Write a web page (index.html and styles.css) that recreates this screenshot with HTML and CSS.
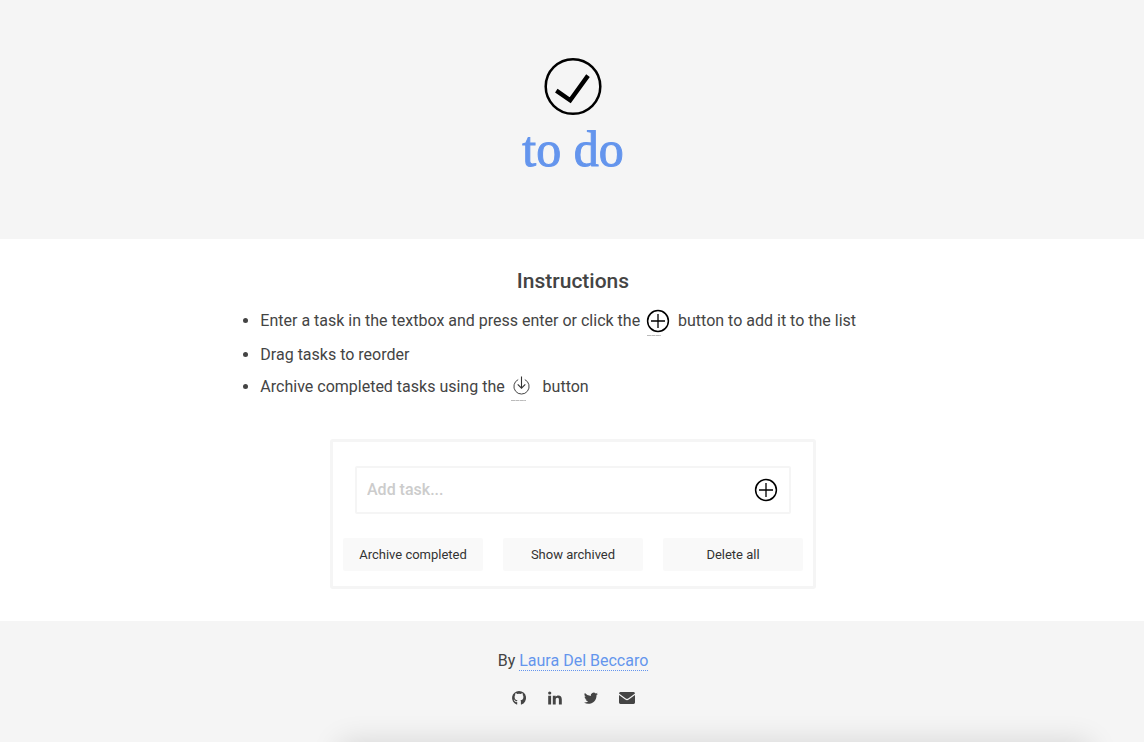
FILE: index.html
```html
<!DOCTYPE html>
<html lang="en">
<head>
<meta charset="utf-8">
<title>to do</title>
<meta name="viewport" content="width=device-width, initial-scale=1">
<link rel="stylesheet" href="styles.css">
</head>
<body>
<svg class="defs" aria-hidden="true">
  <symbol id="plus" viewBox="0 0 24 24"><circle cx="12" cy="12" r="10.4" fill="none" stroke="#000" stroke-width="1.5"/><path d="M12 5v14M5 12h14" stroke="#000" stroke-width="1.3"/></symbol>
</svg>
<header class="banner">
  <svg class="logo" viewBox="0 0 60 60" aria-hidden="true"><circle cx="30" cy="30.500" r="27.300" fill="none" stroke="#000" stroke-width="2.500"/><path d="M13.300 34.600 27.200 44.200 45 19.600" fill="none" stroke="#000" stroke-width="4.400"/></svg>
  <h1 class="title">to do</h1>
</header>
<main class="main">
  <section class="instructions">
    <h2 class="heading">Instructions</h2>
    <ul class="list">
      <li>Enter a task in the textbox and press enter or click the <svg class="icon-add" viewBox="0 0 26 28" role="img" aria-label="add"><use href="#plus" x="1" y="0" width="24" height="24"/><path d="M2 26.500h14" stroke="#bbb" stroke-width="1" stroke-dasharray="4 .4"/></svg> button to add it to the list</li>
      <li>Drag tasks to reorder</li>
      <li>Archive completed tasks using the <svg class="icon-archive" viewBox="0 0 26 28" role="img" aria-label="archive"><path d="M9.200 4.600A7.600 7.600 0 1 0 15.800 4.600" fill="none" stroke="#444" stroke-width="1"/><path d="M12.500 1.500v11.500M8.700 9.400l3.800 3.800 3.800-3.800" fill="none" stroke="#333" stroke-width="1.100"/><path d="M2 25.500h15" stroke="#bbb" stroke-width="1" stroke-dasharray="4 .4"/></svg> button</li>
    </ul>
  </section>
  <section class="card">
    <form class="entry">
      <input class="entry-input" type="text" placeholder="Add task..." aria-label="Add task">
      <button class="entry-add" type="button" aria-label="Add"><svg class="icon-plus"><use href="#plus"/></svg></button>
    </form>
    <div class="actions">
      <button class="action" type="button">Archive completed</button>
      <button class="action" type="button">Show archived</button>
      <button class="action" type="button">Delete all</button>
    </div>
  </section>
</main>
<footer class="footer">
  <p class="credit">By <a class="author" href="#">Laura Del Beccaro</a></p>
  <nav class="social">
    <a href="#" aria-label="GitHub"><svg viewBox="0 0 16 16"><path fill="#444" d="M8 1a7 7 0 0 0-2.3 13.6c.4.1.5-.1.5-.4v-2.1c-2 .4-2.500-.9-2.500-.9-.3-.8-.8-1-.8-1-.6-.4.1-.4.1-.4.7 0 1.100.7 1.100.7.6 1.100 1.600.8 2 .6.1-.5.3-.8.5-.9-1.600-.2-3-.8-3-3.200 0-.9.2-1.400.7-1.900-.1-.2-.3-.9.1-1.900 0 0 .6-.2 1.900.7a6.500 6.500 0 0 1 3.400 0c1.300-.9 1.900-.7 1.900-.7.4 1 .2 1.700.1 1.900.5.5.7 1 .7 1.900 0 2.400-1.400 3-3 3.200.3.2.5.6.5 1.300v2.700c0 .3.1.5.5.4A7 7 0 0 0 8 1z"/><path d="M5.200 5.700Q8 4.300 10.800 5.700 12.800 10 8 10.200 3.200 10 5.200 5.700z" fill="#f5f5f5"/></svg></a>
    <a href="#" aria-label="LinkedIn"><svg viewBox="0 0 16 16"><path fill="#444" d="M1.200 5.700h2.900v8.700H1.200zM5.800 5.700h2.900v1.200c.5-.8 1.300-1.400 2.700-1.400 2.200 0 3.400 1.400 3.400 3.900v5h-2.900V9.700c0-1.200-.5-1.900-1.500-1.900-1.100 0-1.700.8-1.700 2v4.600H5.800z"/><circle cx="2.700" cy="3" r="1.600" fill="#444"/></svg></a>
    <a href="#" aria-label="Twitter"><svg viewBox="0 0 16 16"><path fill="#444" d="M15 3.700a6 6 0 0 1-1.500 1.500c.2 5-3.600 8.600-8.200 8.600A8 8 0 0 1 1 12.500a6 6 0 0 0 4.200-1.200 3 3 0 0 1-2.700-2h1.300A2.900 2.900 0 0 1 1.500 6.400c.4.2.8.3 1.300.4A2.900 2.900 0 0 1 1.900 3a8.200 8.200 0 0 0 5.900 3 2.900 2.900 0 0 1 4.900-2.600l1.900-.7-1.300 1.500z"/></svg></a>
    <a href="#" aria-label="Email"><svg viewBox="0 0 16 16"><path fill="#444" d="M1.400 2h13.200Q16 2 16 3.500L9.200 8.600Q8 9.400 6.800 8.600L0 3.600Q0 2 1.400 2zM0 5l6.200 4.600q1.800 1.200 3.600 0L16 5v7.600q0 1.400-1.400 1.400H1.400Q0 14 0 12.600z"/></svg></a>
  </nav>
</footer>
<div class="shade" aria-hidden="true"></div>
</body>
</html>
```
FILE: styles.css
```css
* { box-sizing: border-box; }

body {
  margin: 0;
  min-height: 100vh;
  display: flex;
  flex-direction: column;
  background: #fff;
  color: #444;
  font: 16px/24px Roboto, sans-serif;
  overflow-x: hidden;
}

.defs { position: absolute; width: 0; height: 0; }

.banner {
  display: flex;
  flex-direction: column;
  align-items: center;
  padding: 56px 20px 60px 22px;
  background: #f5f5f5;
}

.logo { width: 60px; height: 60px; }

.title {
  margin: 0;
  padding-top: 3px;
  color: #6495ed;
  font: 400 50px/60px "Liberation Serif", serif;
  -webkit-text-stroke: 1px #6495ed;
}

.main { padding: 28px 20px 32px 22px; }

.instructions { width: 64%; min-width: 300px; margin: 0 auto; }

.heading {
  margin: 0;
  text-align: center;
  font-size: 21px;
  font-weight: 500;
  line-height: 28px;
}

.list { margin: 10px 0 36px; padding-left: 40px; }
.list li { line-height: 32px; }
.list li:first-child { padding-bottom: 2px; }

.icon-add, .icon-archive { width: 26px; height: 28px; vertical-align: -11px; }
.icon-add { margin: 0 3px 0 1px; }
.icon-archive { margin-right: 4px; }

.card {
  max-width: 486px;
  margin: 0 auto;
  padding: 24px 10px 15px;
  border: 3px solid #f5f5f5;
  border-radius: 3px;
}

.entry {
  display: flex;
  align-items: center;
  height: 48px;
  margin: 0 12px 24px;
  padding-right: 11px;
  border: 2px solid #f5f5f5;
  border-radius: 2px;
}

.entry-input {
  flex: 1;
  min-width: 0;
  padding: 0 10px;
  border: 0;
  outline: 0;
  background: none;
  color: #444;
  font: 500 16px/24px Roboto, sans-serif;
}

.entry-input::placeholder { color: #ccc; opacity: 1; }

.entry-add { padding: 0; border: 0; background: none; }
.icon-plus { display: block; width: 24px; height: 24px; }

.actions { display: grid; grid-template-columns: repeat(3, 1fr); gap: 20px; }

.action {
  height: 33px;
  padding: 0;
  border: 0;
  border-radius: 2px;
  background: #f9f9f9;
  color: #333;
  font: 400 13px/20px Roboto, sans-serif;
}

.footer {
  flex: 1;
  padding: 28px 20px 28px 22px;
  background: #f5f5f5;
  text-align: center;
}

.credit { margin: 0; }
.author { color: #6495ed; text-decoration: none; border-bottom: 1px dotted #6495ed; }

.social { display: flex; justify-content: center; gap: 20px; margin-top: 17px; }
.social svg { display: block; width: 16px; height: 16px; }

.shade {
  position: fixed;
  top: 100%;
  left: 30%;
  right: 5%;
  height: 40px;
  box-shadow: 0 4px 30px 3px rgba(0, 0, 0, .14);
  pointer-events: none;
}
```
